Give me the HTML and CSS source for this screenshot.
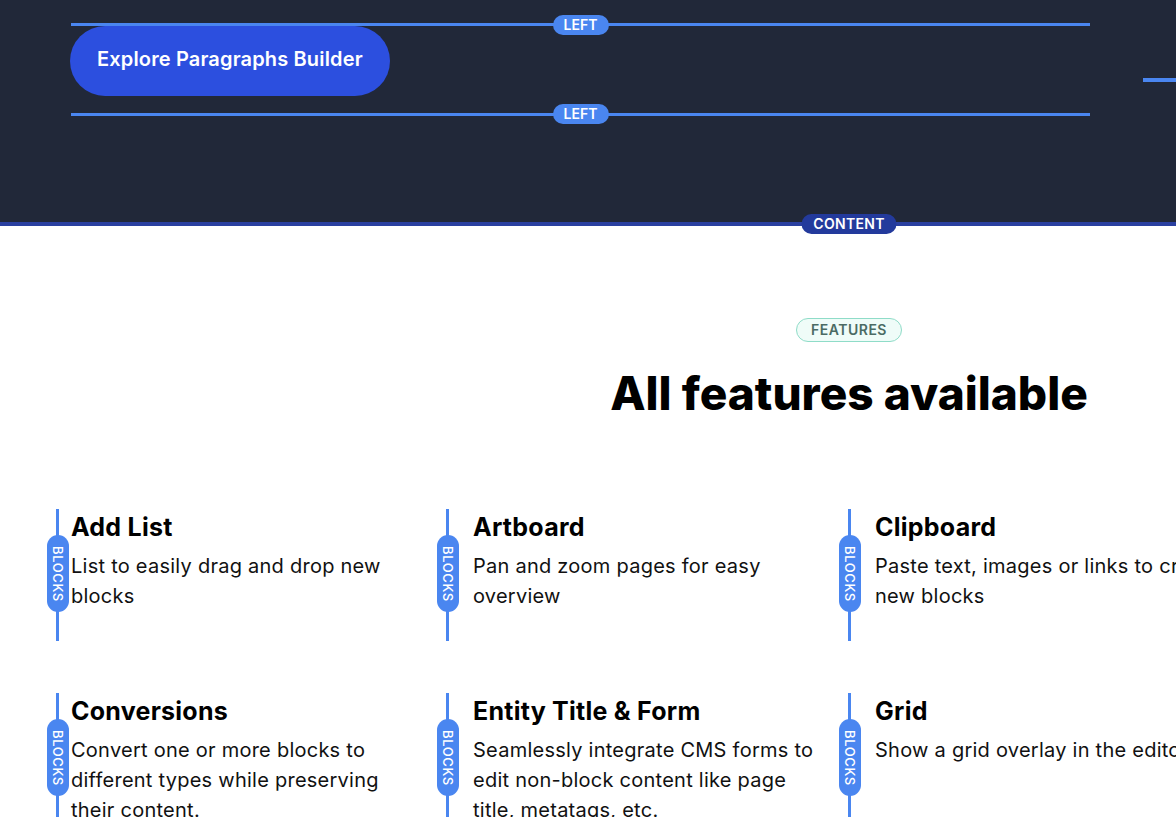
FILE: index.html
```html
<!DOCTYPE html>
<html lang="en">
<head>
<meta charset="utf-8">
<title>Paragraphs Builder</title>
<link rel="stylesheet" href="styles.css">
</head>
<body>
<div class="page">
  <header class="hero">
    <div class="hero-inner">
      <div class="region region-left">
        <span class="region-label region-label-top">LEFT</span>
        <a class="cta" href="#">Explore Paragraphs Builder</a>
        <span class="region-label region-label-bottom">LEFT</span>
      </div>
      <div class="region-right"></div>
    </div>
    <span class="content-label">CONTENT</span>
  </header>

  <section class="features">
    <div class="features-head">
      <span class="eyebrow">FEATURES</span>
      <h2 class="features-title">All features available</h2>
    </div>
    <div class="features-grid">
      <div class="feature">
        <span class="marker"><span class="marker-pill">BLOCKS</span></span>
        <h3 class="feature-title">Add List</h3>
        <p class="feature-text">List to easily drag and drop new blocks</p>
      </div>
      <div class="feature">
        <span class="marker"><span class="marker-pill">BLOCKS</span></span>
        <h3 class="feature-title">Artboard</h3>
        <p class="feature-text">Pan and zoom pages for easy overview</p>
      </div>
      <div class="feature">
        <span class="marker"><span class="marker-pill">BLOCKS</span></span>
        <h3 class="feature-title">Clipboard</h3>
        <p class="feature-text">Paste text, images or links to create new blocks</p>
      </div>
      <div class="feature">
        <span class="marker"><span class="marker-pill">BLOCKS</span></span>
        <h3 class="feature-title">Conversions</h3>
        <p class="feature-text">Convert one or more blocks to different types while preserving their content.</p>
      </div>
      <div class="feature">
        <span class="marker"><span class="marker-pill">BLOCKS</span></span>
        <h3 class="feature-title">Entity Title &amp; Form</h3>
        <p class="feature-text">Seamlessly integrate CMS forms to edit non-block content like page title, metatags, etc.</p>
      </div>
      <div class="feature">
        <span class="marker"><span class="marker-pill">BLOCKS</span></span>
        <h3 class="feature-title">Grid</h3>
        <p class="feature-text">Show a grid overlay in the editor</p>
      </div>
    </div>
  </section>
</div>
</body>
</html>
```

FILE: styles.css
```css
html, body {
  margin: 0;
  padding: 0;
  overflow-x: hidden;
}

body {
  font-family: Inter, "Noto Sans", "Liberation Sans", sans-serif;
  color: #000;
  background: #fff;
}

.page {
  width: 1698px;
}

/* Hero */
.hero {
  position: relative;
  background: #212839;
  border-bottom: 4px solid #2a40a0;
  padding: 23px 0 106px 71px;
}

.hero-inner {
  display: flex;
  align-items: flex-start;
  gap: 53px;
}

.region-left {
  position: relative;
  width: 1019px;
  border-top: 3px solid #4a86f0;
  border-bottom: 3px solid #4a86f0;
  padding-bottom: 17px;
}

.region-right {
  flex: 1;
  margin-top: 55px;
  border-top: 4px solid #4a86f0;
}

.region-label {
  position: absolute;
  left: 50%;
  transform: translateX(-50%);
  width: 56px;
  height: 20px;
  border-radius: 10px;
  background: #4a86f0;
  color: #fff;
  font-size: 14px;
  font-weight: 600;
  line-height: 20px;
  text-align: center;
}

.region-label-top { top: -11px; }
.region-label-bottom { bottom: -11px; }

.cta {
  display: inline-flex;
  align-items: center;
  box-sizing: border-box;
  height: 70px;
  padding: 0 27px 4px;
  margin-left: -1px;
  border-radius: 35px;
  background: #2c4fdf;
  color: #fff;
  font-size: 20px;
  font-weight: 600;
  letter-spacing: 0.15px;
  text-decoration: none;
}

.content-label {
  position: absolute;
  left: 50%;
  bottom: -12px;
  transform: translateX(-50%);
  width: 95px;
  height: 20px;
  border-radius: 10px;
  background: #233a9c;
  color: #fff;
  font-size: 14px;
  font-weight: 600;
  letter-spacing: 0.3px;
  line-height: 20px;
  text-align: center;
}

/* Features */
.features {
  padding-top: 92px;
}

.features-head {
  display: flex;
  flex-direction: column;
  align-items: center;
}

.eyebrow {
  box-sizing: border-box;
  width: 106px;
  height: 24px;
  border: 1px solid #8fdcc8;
  border-radius: 12px;
  background: #effcf8;
  color: #4b6b64;
  font-size: 14px;
  font-weight: 600;
  letter-spacing: 0.5px;
  line-height: 22px;
  text-align: center;
}

.features-title {
  margin: 24px 0 0;
  font-size: 46px;
  font-weight: 800;
  line-height: 54px;
  letter-spacing: 0;
}

.features-grid {
  display: grid;
  grid-template-columns: repeat(3, 356px);
  column-gap: 46px;
  row-gap: 52px;
  margin-top: 89px;
  padding-left: 71px;
}

.feature {
  position: relative;
  padding-bottom: 30px;
}

.marker {
  position: absolute;
  top: 0;
  bottom: 0;
  left: -27px;
  width: 3px;
  background: #4a86f0;
}

.feature:nth-child(3n+1) .marker {
  left: -15px;
}

.marker-pill {
  position: absolute;
  top: 26px;
  left: 50%;
  transform: translateX(-50%);
  display: flex;
  align-items: center;
  justify-content: center;
  width: 22px;
  height: 77px;
  border-radius: 11px;
  background: #4a86f0;
  color: #fff;
  font-size: 13px;
  font-weight: 500;
  letter-spacing: 0.6px;
  writing-mode: vertical-rl;
}

.feature-title {
  margin: 0 0 6px;
  font-size: 25px;
  font-weight: 700;
  line-height: 36px;
  letter-spacing: 0.25px;
}

.feature-text {
  margin: 0;
  font-size: 20px;
  font-weight: 400;
  line-height: 30px;
  letter-spacing: 0.25px;
  color: #111;
}
```
